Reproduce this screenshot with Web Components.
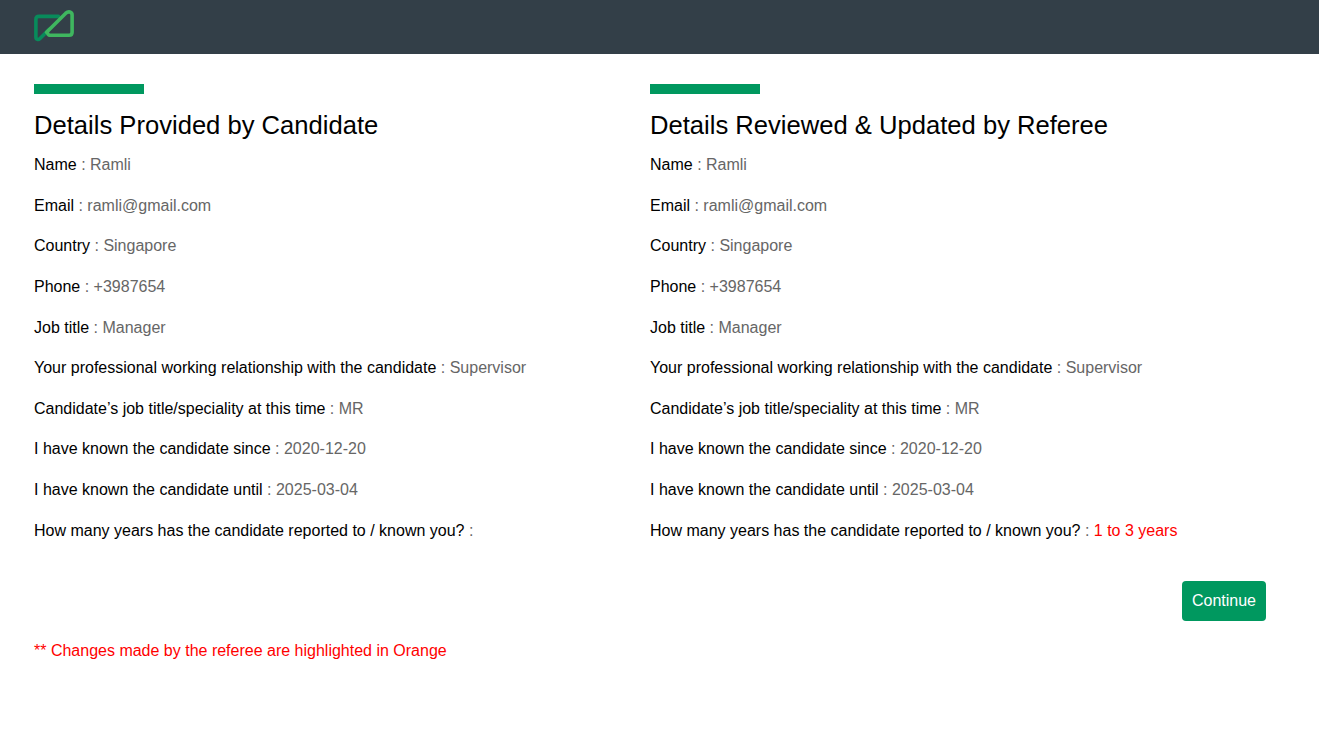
<!DOCTYPE html>
<html lang="en">
<head>
<meta charset="utf-8">
<title>Referee details</title>
<style>
body { margin: 0; background: #fff; color: #000; font: 16px/24.64px "Liberation Sans", Arial, sans-serif; }
</style>
</head>
<body>
<review-page></review-page>
<script>
const define = (name, html) => customElements.define(name, class extends HTMLElement {
  constructor() {
    super();
    this.attachShadow({ mode: "open" }).innerHTML = html;
  }
});

define("app-header", `
<style>
:host { display: flex; height: 54px; box-sizing: border-box; padding: 10px 34px; background: #333f48; }
svg { display: block; }
</style>
<svg width="40" height="32" viewBox="0 0 40 32" fill="none" stroke-width="3.6" stroke-linecap="round" stroke-linejoin="round" aria-label="Logo">
<path stroke="#088b5b" d="M24.5 6.4H5Q1.9 6.4 1.9 9.5V27C1.9 29.6 4.4 30.2 6 28.5L15 19.4"/>
<path stroke="#3fb65f" d="M12.6 22.2L31.8 3.2C34.5.8 38.1 1.9 38.1 5V22.2Q38.1 25.3 35 25.3H16.5Q14.2 25.3 13.8 23.6"/>
</svg>`);

define("detail-row", `
<style>
:host { display: block; margin-bottom: 16px; color: #666; }
.label { color: #000; }
:host([changed]) .value { color: #f00; }
</style>
<span class="label"><slot name="label"></slot></span> : <span class="value"><slot></slot></span>`);

define("details-panel", `
<style>
:host { display: block; min-width: 0; }
.bar { width: 110px; height: 10px; background: #00985f; }
h2 { margin: 15px 0 12px; font-size: 25.6px; font-weight: 400; line-height: 32px; }
</style>
<div class="bar"></div>
<h2><slot name="title"></slot></h2>
<slot></slot>`);

define("action-button", `
<style>
:host { display: block; }
button { display: block; height: 40px; padding: 0 10px; border: 0; border-radius: 4px; background: #00985f; color: #fff; font: inherit; }
</style>
<button type="button"><slot></slot></button>`);

const common = [
  ["Name", "Ramli"],
  ["Email", "ramli@gmail.com"],
  ["Country", "Singapore"],
  ["Phone", "+3987654"],
  ["Job title", "Manager"],
  ["Your professional working relationship with the candidate", "Supervisor"],
  ["Candidate’s job title/speciality at this time", "MR"],
  ["I have known the candidate since", "2020-12-20"],
  ["I have known the candidate until", "2025-03-04"]
];
const row = ([label, value, changed]) =>
  `<detail-row${changed ? " changed" : ""}><span slot="label">${label}</span>${value}</detail-row>`;
const years = "How many years has the candidate reported to / known you?";

define("review-page", `
<style>
:host { display: block; }
main { padding: 30px 53px 0 34px; }
.columns { display: grid; grid-template-columns: 1fr 1fr; }
.actions { display: flex; justify-content: flex-end; padding-top: 22px; }
.note { margin: 18px 0 0; color: #f00; }
</style>
<app-header></app-header>
<main>
<div class="columns">
<details-panel><span slot="title">Details Provided by Candidate</span>${[...common, [years, ""]].map(row).join("")}</details-panel>
<details-panel><span slot="title">Details Reviewed &amp; Updated by Referee</span>${[...common, [years, "1 to 3 years", true]].map(row).join("")}</details-panel>
</div>
<div class="actions"><action-button>Continue</action-button></div>
<p class="note">** Changes made by the referee are highlighted in Orange</p>
</main>`);
</script>
</body>
</html>
